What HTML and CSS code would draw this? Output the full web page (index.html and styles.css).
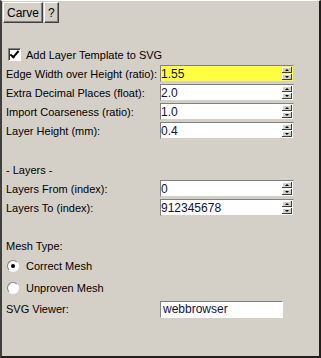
FILE: index.html
```
<!DOCTYPE html>
<html lang="en">

<head>
    <meta charset="UTF-8" />
    <title>Carve</title>
    <link rel="stylesheet" href="styles.css">
</head>

<body>
    <div class="frm">
        <div class="tabs">
            <button class="tab">Carve</button>
            <button class="tab">?</button>
        </div>

        <div class="pnl">
            <label class="chk-row">
                <span class="chk checked"></span>
                Add Layer Template to SVG
            </label>

            <div class="row">
                <span class="lbl">Edge Width over Height (ratio):</span>
                <div class="spin hl"><span class="val">1.55</span><span class="arr"><i class="up"></i><i class="dn"></i></span></div>
            </div>
            <div class="row">
                <span class="lbl">Extra Decimal Places (float):</span>
                <div class="spin"><span class="val">2.0</span><span class="arr"><i class="up"></i><i class="dn"></i></span></div>
            </div>
            <div class="row">
                <span class="lbl">Import Coarseness (ratio):</span>
                <div class="spin"><span class="val">1.0</span><span class="arr"><i class="up"></i><i class="dn"></i></span></div>
            </div>
            <div class="row">
                <span class="lbl">Layer Height (mm):</span>
                <div class="spin"><span class="val">0.4</span><span class="arr"><i class="up"></i><i class="dn"></i></span></div>
            </div>

            <div class="sect">- Layers -</div>
            <div class="row">
                <span class="lbl">Layers From (index):</span>
                <div class="spin"><span class="val">0</span><span class="arr"><i class="up"></i><i class="dn"></i></span></div>
            </div>
            <div class="row">
                <span class="lbl">Layers To (index):</span>
                <div class="spin"><span class="val">912345678</span><span class="arr"><i class="up"></i><i class="dn"></i></span></div>
            </div>

            <div class="sect mesh">Mesh Type:</div>
            <label class="radio-row">
                <span class="rad on"></span>
                Correct Mesh
            </label>
            <label class="radio-row">
                <span class="rad"></span>
                Unproven Mesh
            </label>

            <div class="row viewer">
                <span class="lbl">SVG Viewer:</span>
                <div class="txt">webbrowser</div>
            </div>
        </div>
    </div>
</body>

</html>
```

FILE: styles.css
```
body {
    margin: 0;
    font-family: "Liberation Sans", Arial, sans-serif;
    font-size: 11px;
    color: #000;
    background: #d4d0c8;
}

.frm {
    width: 321px;
    height: 358px;
    box-sizing: border-box;
    border-top: 1px solid #fff;
    border-left: 2px solid #404040;
    border-right: 2px solid #202020;
    border-bottom: 2px solid #202020;
    background: #d4d0c8;
}

.tabs {
    display: flex;
    padding: 1px 0 0 1px;
    gap: 1px;
}

.tab {
    font: inherit;
    font-size: 12px;
    height: 21px;
    padding: 0 3px;
    background: #d4d0c8;
    border: 1px solid;
    border-color: #fff #404040 #404040 #fff;
    box-shadow: inset -1px -1px 0 #808080;
    color: #000;
}

.pnl {
    padding: 22px 0 0 4px;
    display: flex;
    flex-direction: column;
}

.chk-row {
    display: flex;
    align-items: center;
    height: 19px;
    padding-left: 2px;
    gap: 5px;
}

.chk {
    width: 11px;
    height: 11px;
    background: #fff;
    border: 1px solid;
    border-color: #808080 #fff #fff #808080;
    box-shadow: inset 1px 1px 0 #404040;
    position: relative;
}

.chk.checked::after {
    content: "";
    position: absolute;
    left: 3px;
    top: 0px;
    width: 3px;
    height: 7px;
    border: solid #000;
    border-width: 0 2px 2px 0;
    transform: rotate(40deg);
}

.row {
    display: flex;
    align-items: center;
    height: 19px;
}

.lbl {
    width: 154px;
}

.spin {
    width: 134px;
    height: 17px;
    box-sizing: border-box;
    display: flex;
    align-items: center;
    background: #fff;
    border: 1px solid;
    border-color: #808080 #d4d0c8 #d4d0c8 #808080;
    padding-right: 1px;
}

.spin.hl {
    background: #ffff40;
}

.val {
    flex: 1;
    font-size: 12px;
    color: #101040;
}

.arr {
    display: flex;
    flex-direction: column;
    gap: 1px;
}

.arr i {
    width: 10px;
    height: 6px;
    background: #d4d0c8;
    border: 0;
    box-shadow: inset -1px -1px 0 #404040, inset 1px 1px 0 #fff;
    position: relative;
}

.arr i::after {
    content: "";
    position: absolute;
    left: 3px;
    border-left: 2px solid transparent;
    border-right: 2px solid transparent;
}

.arr .up::after {
    top: 2px;
    border-bottom: 2px solid #000;
}

.arr .dn::after {
    top: 2px;
    border-top: 2px solid #000;
}

.sect {
    height: 19px;
    display: flex;
    align-items: center;
    margin-top: 20px;
}

.sect.mesh {
    margin-top: 19px;
}

.radio-row {
    display: flex;
    align-items: center;
    height: 22px;
    padding-left: 1px;
    gap: 7px;
}

.rad {
    width: 12px;
    height: 12px;
    border-radius: 50%;
    background: #fff;
    box-sizing: border-box;
    border: 1px solid;
    border-color: #808080 #fff #fff #808080;
    position: relative;
}

.rad.on::after {
    content: "";
    position: absolute;
    left: 3px;
    top: 3px;
    width: 4px;
    height: 4px;
    border-radius: 50%;
    background: #000;
}

.viewer {
    height: 20px;
}

.txt {
    width: 123px;
    height: 17px;
    box-sizing: border-box;
    background: #fff;
    border: 1px solid;
    border-color: #808080 #fff #fff #808080;
    font-size: 12px;
    line-height: 15px;
    padding-left: 2px;
    color: #101040;
}
```
